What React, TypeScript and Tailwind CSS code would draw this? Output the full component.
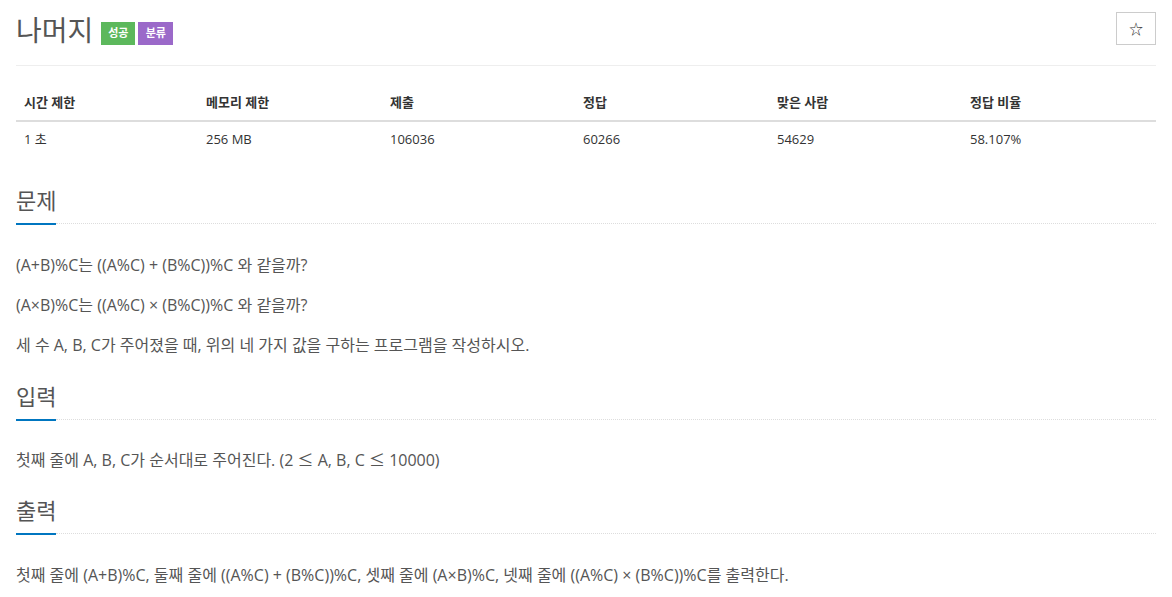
import React from "react";

const font = { fontFamily: '"Open Sans", "Noto Sans CJK KR", sans-serif' };

function SectionTitle({ title }: { title: string }) {
  return (
    <div>
      <div className="h-[30px] text-[22px] leading-[30px] text-[#555]">{title}</div>
      <div className="mt-[8px] flex items-start">
        <div className="h-[2px] w-[40px] bg-[#0076c0]" />
        <div className="h-0 flex-1 border-t border-dotted border-[#ddd]" />
      </div>
    </div>
  );
}

function P({ children }: { children: React.ReactNode }) {
  return <p className="h-[24px] text-[16px] leading-[24px] text-[#555]">{children}</p>;
}

function Le() {
  return <span style={{ fontFamily: '"Noto Sans CJK KR", sans-serif' }}>≤</span>;
}

export default function App() {
  const heads = ["시간 제한", "메모리 제한", "제출", "정답", "맞은 사람", "정답 비율"];
  const vals = ["1 초", "256 MB", "106036", "60266", "54629", "58.107%"];
  return (
    <div className="min-h-[597px] w-[1172px] bg-white px-[16px]" style={font}>
      <div className="flex h-[66px] items-start justify-between border-b border-[#eee]">
        <div className="mt-[11px] flex items-center">
          <span className="text-[28px] leading-[38px] text-[#555]">나머지</span>
          <span className="ml-[8px] mt-[6px] flex h-[23px] w-[34px] items-center justify-center bg-[#5cb85c] text-[11px] font-bold text-white">성공</span>
          <span className="ml-[3px] mt-[6px] flex h-[23px] w-[35px] items-center justify-center bg-[#9b69c9] text-[11px] font-bold text-white">분류</span>
        </div>
        <div className="mt-[12px] flex h-[33px] w-[40px] items-center justify-center border border-[#ccc] text-[14px] text-[#333]">☆</div>
      </div>
      <div className="mt-[18px] text-[13px] text-[#333]">
        <div className="grid grid-cols-[182px_184px_193px_194px_193px_194px] border-b-2 border-[#ddd]">
          {heads.map((h) => (
            <div key={h} className="h-[36px] px-[8px] pt-[9px] font-bold leading-[18px]">{h}</div>
          ))}
        </div>
        <div className="grid grid-cols-[182px_184px_193px_194px_193px_194px]">
          {vals.map((v) => (
            <div key={v} className="h-[34px] px-[8px] pt-[8px] leading-[18px]">{v}</div>
          ))}
        </div>
      </div>
      <div className="mt-[29px]">
        <SectionTitle title="문제" />
        <div className="mt-[28px] flex flex-col gap-[16px]">
          <P>(A+B)%C는 ((A%C) + (B%C))%C 와 같을까?</P>
          <P>(A×B)%C는 ((A%C) × (B%C))%C 와 같을까?</P>
          <P>세 수 A, B, C가 주어졌을 때, 위의 네 가지 값을 구하는 프로그램을 작성하시오.</P>
        </div>
      </div>
      <div className="mt-[24px]">
        <SectionTitle title="입력" />
        <div className="mt-[26px]">
          <P>첫째 줄에 A, B, C가 순서대로 주어진다. (2 <Le /> A, B, C <Le /> 10000)</P>
        </div>
      </div>
      <div className="mt-[24px]">
        <SectionTitle title="출력" />
        <div className="mt-[28px]">
          <P>첫째 줄에 (A+B)%C, 둘째 줄에 ((A%C) + (B%C))%C, 셋째 줄에 (A×B)%C, 넷째 줄에 ((A%C) × (B%C))%C를 출력한다.</P>
        </div>
      </div>
    </div>
  );
}
